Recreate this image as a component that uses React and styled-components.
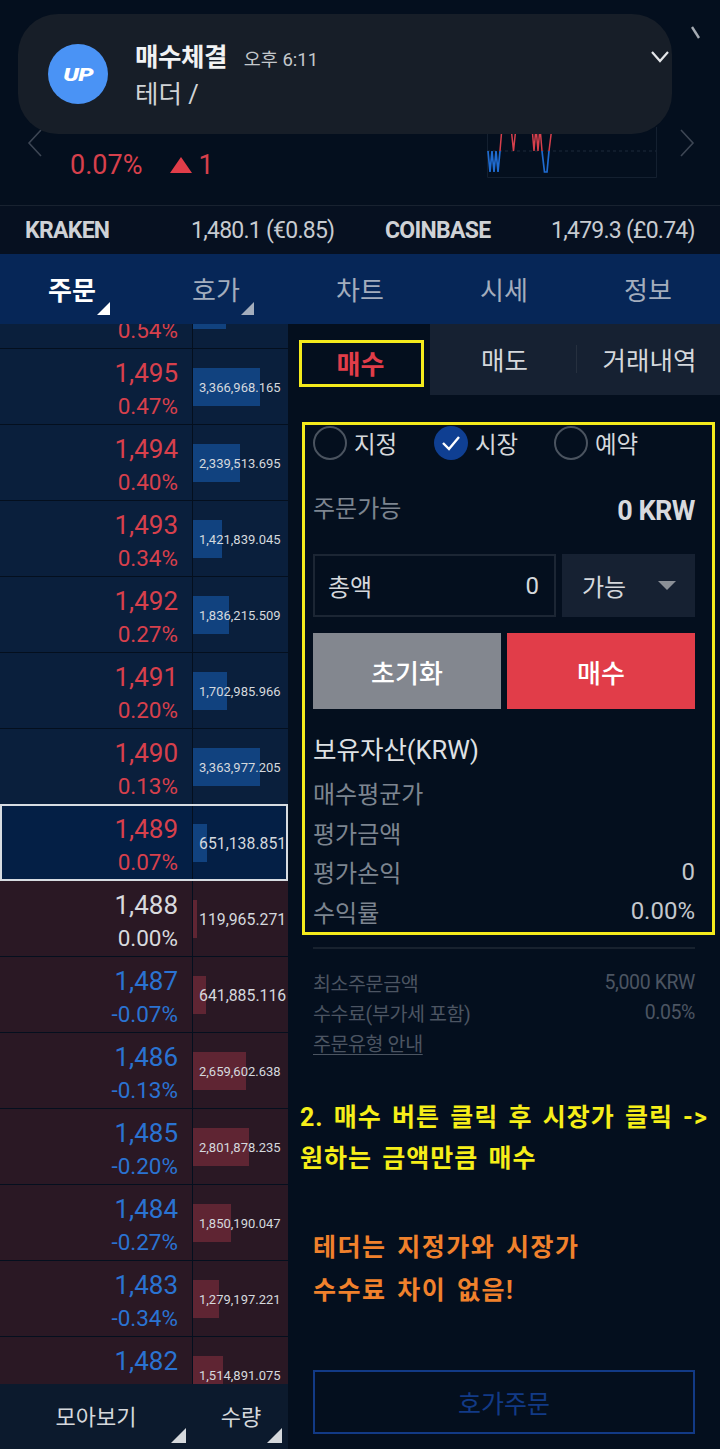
import { createGlobalStyle } from "styled-components";
import styled from "styled-components";

const GlobalStyle = createGlobalStyle`
    html, body {
        margin: 0;
        padding: 0;
        background: #040f1e;
    }
    * {
        box-sizing: border-box;
    }
`

const KR = `Roboto, "Noto Sans CJK KR", sans-serif`

const asks = [
    { price: '1,495', rate: '0.47%', qty: '3,366,968.165', bar: 67 },
    { price: '1,494', rate: '0.40%', qty: '2,339,513.695', bar: 47 },
    { price: '1,493', rate: '0.34%', qty: '1,421,839.045', bar: 29 },
    { price: '1,492', rate: '0.27%', qty: '1,836,215.509', bar: 36 },
    { price: '1,491', rate: '0.20%', qty: '1,702,985.966', bar: 34 },
    { price: '1,490', rate: '0.13%', qty: '3,363,977.205', bar: 67 },
    { price: '1,489', rate: '0.07%', qty: '651,138.851', bar: 14, current: true },
]

const bids = [
    { price: '1,488', rate: '0.00%', qty: '119,965.271', bar: 4, tone: 'flat' },
    { price: '1,487', rate: '-0.07%', qty: '641,885.116', bar: 13 },
    { price: '1,486', rate: '-0.13%', qty: '2,659,602.638', bar: 53 },
    { price: '1,485', rate: '-0.20%', qty: '2,801,878.235', bar: 56 },
    { price: '1,484', rate: '-0.27%', qty: '1,850,190.047', bar: 38 },
    { price: '1,483', rate: '-0.34%', qty: '1,279,197.221', bar: 26 },
]

const Chevron = ({ left }) => (
    <svg width="16" height="28" viewBox="0 0 16 28" fill="none" stroke="#3d4654" strokeWidth="1.6">
        <path d={left ? "M14 1 L2 14 L14 27" : "M2 1 L14 14 L2 27"} />
    </svg>
)

const App = () => {
    const renderRow = (row, side) => (
        <Row key={row.price} side={side} current={row.current}>
            <PriceCell>
                <Price tone={row.tone || (side === 'ask' ? 'up' : 'down')}>{row.price}</Price>
                <Rate tone={row.tone || (side === 'ask' ? 'up' : 'down')}>{row.rate}</Rate>
            </PriceCell>
            <QtyCell>
                <QtyBar side={side} style={{ width: row.bar }} />
                <Qty long={row.qty.length > 11}>{row.qty}</Qty>
            </QtyCell>
        </Row>
    )

    return (
        <Page>
            <GlobalStyle />
            <Notification>
                <AppLogo><LogoText>UP</LogoText></AppLogo>
                <NotificationBody>
                    <NotificationHead>
                        <NotificationTitle>매수체결</NotificationTitle>
                        <NotificationTime>오후 6:11</NotificationTime>
                    </NotificationHead>
                    <NotificationText>테더 /</NotificationText>
                </NotificationBody>
                <Expand>
                    <svg width="20" height="14" viewBox="0 0 20 14" fill="none" stroke="#e4e6e9" strokeWidth="2.2">
                        <path d="M2 2 L10 11 L18 2" />
                    </svg>
                </Expand>
            </Notification>
            <CornerMark>
                <svg width="10" height="14" viewBox="0 0 10 14" fill="none" stroke="#a5abb3" strokeWidth="2.4">
                    <path d="M1 1 L8 12" />
                </svg>
            </CornerMark>

            <Summary>
                <Chevron left />
                <SummaryMain>
                    <SummaryRate>0.07%</SummaryRate>
                    <SummaryDiff><Triangle />1</SummaryDiff>
                </SummaryMain>
                <Spark width="171" height="51" viewBox="0 0 171 51" fill="none">
                    <path d="M0.5 0 V50.5 H169.5 V0" stroke="#142030" />
                    <path d="M0 24 H169" stroke="#1d2a3a" strokeDasharray="3 3" />
                    <path d="M13 24 L15 0 M24 0 L26.5 24 L29 0 M45 0 L47 24 L49 0 L51 24 L53 0 L55 24 M62 24 L65 0" stroke="#d7404c" strokeWidth="1.5" />
                    <path d="M1 24 L3 45 L5 24 L7 45 L9 24 L11 45 L13 24 M55 24 L57.5 45 L60 45 L62 24" stroke="#1f6bd0" strokeWidth="1.7" />
                </Spark>
                <Chevron />
            </Summary>

            <Exchanges>
                <ExchangeName>KRAKEN</ExchangeName>
                <ExchangeValue>1,480.1 (€0.85)</ExchangeValue>
                <ExchangeName>COINBASE</ExchangeName>
                <ExchangeValue>1,479.3 (£0.74)</ExchangeValue>
            </Exchanges>

            <Tabs>
                <Tab active marked>주문</Tab>
                <Tab marked>호가</Tab>
                <Tab>차트</Tab>
                <Tab>시세</Tab>
                <Tab>정보</Tab>
            </Tabs>

            <Content>
                <OrderBook>
                    <BookList>
                        <PartialRow>
                            <PartialPrice><Rate tone="up">0.54%</Rate></PartialPrice>
                            <PartialQty><QtyBar side="ask" style={{ width: 33, height: 5 }} /></PartialQty>
                        </PartialRow>
                        {asks.map(row => renderRow(row, 'ask'))}
                        {bids.map(row => renderRow(row, 'bid'))}
                        <Row side="bid">
                            <PriceCell>
                                <Price tone="down">1,482</Price>
                            </PriceCell>
                            <QtyCell>
                                <QtyBar side="bid" style={{ width: 30 }} />
                                <Qty long>1,514,891.075</Qty>
                            </QtyCell>
                        </Row>
                    </BookList>
                    <BookFooter>
                        <FooterItem>모아보기</FooterItem>
                        <FooterItem narrow>수량</FooterItem>
                    </BookFooter>
                </OrderBook>

                <OrderPanel>
                    <SideTabs>
                        <BuyTab><BuyTabMark>매수</BuyTabMark></BuyTab>
                        <SideTab>매도</SideTab>
                        <SideTab divided>거래내역</SideTab>
                    </SideTabs>

                    <FormBox>
                        <RadioRow>
                            <RadioOption><Radio /><RadioLabel>지정</RadioLabel></RadioOption>
                            <RadioOption>
                                <Radio checked>
                                    <svg width="22" height="18" viewBox="0 0 22 18" fill="none" stroke="#fff" strokeWidth="2.4">
                                        <path d="M3 9 L9 15 L19 3" />
                                    </svg>
                                </Radio>
                                <RadioLabel>시장</RadioLabel>
                            </RadioOption>
                            <RadioOption><Radio /><RadioLabel>예약</RadioLabel></RadioOption>
                        </RadioRow>

                        <AvailableRow>
                            <MutedLabel>주문가능</MutedLabel>
                            <AvailableValue>0 KRW</AvailableValue>
                        </AvailableRow>

                        <InputRow>
                            <AmountInput>
                                <span>총액</span>
                                <span>0</span>
                            </AmountInput>
                            <SelectBox>
                                <span>가능</span>
                                <Caret />
                            </SelectBox>
                        </InputRow>

                        <ButtonRow>
                            <ActionButton>초기화</ActionButton>
                            <ActionButton primary>매수</ActionButton>
                        </ButtonRow>

                        <HoldingTitle>보유자산(KRW)</HoldingTitle>
                        <HoldingRow><MutedLabel>매수평균가</MutedLabel></HoldingRow>
                        <HoldingRow><MutedLabel>평가금액</MutedLabel></HoldingRow>
                        <HoldingRow><MutedLabel>평가손익</MutedLabel><HoldingValue>0</HoldingValue></HoldingRow>
                        <HoldingRow><MutedLabel>수익률</MutedLabel><HoldingValue>0.00%</HoldingValue></HoldingRow>
                    </FormBox>

                    <InfoBlock>
                        <InfoRow><span>최소주문금액</span><span>5,000 KRW</span></InfoRow>
                        <InfoRow><span>수수료(부가세 포함)</span><span>0.05%</span></InfoRow>
                        <InfoRow><InfoLink>주문유형 안내</InfoLink></InfoRow>
                    </InfoBlock>

                    <YellowNote>
                        2. 매수 버튼 클릭 후 시장가 클릭 -&gt;<br />
                        원하는 금액만큼 매수
                    </YellowNote>
                    <OrangeNote>
                        테더는 지정가와 시장가<br />
                        수수료 차이 없음!
                    </OrangeNote>

                    <QuoteButton>호가주문</QuoteButton>
                </OrderPanel>
            </Content>
        </Page>
    )
}

export default App;

const Page = styled.div`
    position: relative;
    width: 720px;
    height: 1449px;
    overflow: hidden;
    display: flex;
    flex-direction: column;
    background: #040f1e;
    font-family: ${KR};
`

const Notification = styled.div`
    position: absolute;
    top: 14px;
    left: 18px;
    width: 654px;
    height: 120px;
    border-radius: 40px;
    background: #171e28;
    display: flex;
    align-items: center;
    padding: 0 0 0 30px;
    z-index: 2;
`

const AppLogo = styled.div`
    width: 60px;
    height: 60px;
    border-radius: 50%;
    background: #4a93f5;
    display: flex;
    align-items: center;
    justify-content: center;
`

const LogoText = styled.span`
    display: inline-block;
    color: #fff;
    font: italic 900 18px Roboto, sans-serif;
    letter-spacing: -0.5px;
    transform: scaleX(1.35);
`

const NotificationBody = styled.div`
    margin-left: 27px;
    padding-top: 3px;
    display: flex;
    flex-direction: column;
    gap: 3px;
`

const NotificationHead = styled.div`
    display: flex;
    align-items: baseline;
    gap: 17px;
`

const NotificationTitle = styled.div`
    color: #f1f2f3;
    font-size: 25.5px;
    font-weight: 700;
    letter-spacing: -0.5px;
    line-height: 34px;
`

const NotificationTime = styled.div`
    color: #c4c8cc;
    font-size: 18.5px;
    font-weight: 400;
`

const NotificationText = styled.div`
    color: #d0d3d6;
    font-size: 25.5px;
    line-height: 34px;
`

const Expand = styled.div`
    position: absolute;
    top: 35px;
    right: -4px;
    width: 26px;
`

const CornerMark = styled.div`
    position: absolute;
    top: 25px;
    left: 691px;
`

const Summary = styled.div`
    height: 205px;
    display: flex;
    align-items: flex-start;
    padding: 129px 0 0 27px;
`

const SummaryMain = styled.div`
    display: flex;
    align-items: center;
    gap: 28px;
    margin: 12px 0 0 27px;
    width: 417px;
    height: 48px;
`

const SummaryRate = styled.div`
    color: #d7404c;
    font-size: 27px;
`

const SummaryDiff = styled.div`
    display: flex;
    align-items: center;
    gap: 6px;
    color: #d7404c;
    font-size: 27px;
`

const Triangle = styled.span`
    width: 0;
    height: 0;
    border-left: 11px solid transparent;
    border-right: 11px solid transparent;
    border-bottom: 16px solid #e13d49;
`

const Spark = styled.svg`
    margin: -2px 21px 0 0;
    flex: none;
    display: block;
`

const Exchanges = styled.div`
    height: 49px;
    border-top: 1px solid #182230;
    display: grid;
    grid-template-columns: 166px 194px 166px 1fr;
    align-items: center;
    padding: 0 0 0 25px;
    background: #061020;
    white-space: nowrap;
`

const ExchangeName = styled.div`
    color: #cfd2d6;
    font-size: 23px;
    font-weight: 700;
    letter-spacing: -0.7px;
`

const ExchangeValue = styled.div`
    color: #c7cbd0;
    font-size: 23px;
    letter-spacing: -0.75px;
`

const Tabs = styled.div`
    height: 70px;
    flex: none;
    background: #062657;
    display: grid;
    grid-template-columns: repeat(5, 144px);
`

const Tab = styled.div`
    position: relative;
    display: flex;
    align-items: center;
    justify-content: center;
    padding-bottom: 2px;
    color: ${props => props.active ? '#fff' : '#a3adbd'};
    font-size: 26px;
    font-weight: ${props => props.active ? 700 : 400};

    &::after {
        content: '';
        display: ${props => props.marked ? 'block' : 'none'};
        position: absolute;
        right: 34px;
        bottom: 9px;
        border-left: 13px solid transparent;
        border-bottom: 13px solid ${props => props.active ? '#fff' : '#a3adbd'};
    }
`

const Content = styled.div`
    flex: 1;
    min-height: 0;
    display: flex;
`

const OrderBook = styled.div`
    width: 288px;
    flex: none;
    display: flex;
    flex-direction: column;
`

const BookList = styled.div`
    flex: 1;
    min-height: 0;
    overflow: hidden;
`

const BookFooter = styled.div`
    height: 65px;
    flex: none;
    background: #0c1a2d;
    display: flex;
`

const FooterItem = styled.div`
    position: relative;
    width: ${props => props.narrow ? '96px' : '192px'};
    display: flex;
    justify-content: center;
    padding: 15px 0 0 ${props => props.narrow ? '2px' : '0'};
    color: #d5d8dc;
    font-size: 22px;

    &::after {
        content: '';
        position: absolute;
        right: 6px;
        bottom: 6px;
        border-left: 15px solid transparent;
        border-bottom: 15px solid #d5d8dc;
    }
`

const PartialRow = styled.div`
    height: 25px;
    display: flex;
    background: #0a1f3c;
    border-bottom: 1px solid #040f1e;
    overflow: hidden;
`

const PartialPrice = styled.div`
    width: 192px;
    flex: none;
    display: flex;
    justify-content: flex-end;
    align-items: flex-end;
    padding-right: 14px;
    margin-bottom: 2px;
`

const PartialQty = styled.div`
    flex: 1;
    border-left: 1px solid #040f1e;
`

const Row = styled.div`
    position: relative;
    height: 76px;
    display: flex;
    background: ${props => props.side === 'ask' ? '#0a1f3c' : '#2a1824'};
    border-bottom: 1px solid #040f1e;
    ${props => props.current ? 'background: #041f45;' : ''}

    &::after {
        content: '';
        display: ${props => props.current ? 'block' : 'none'};
        position: absolute;
        inset: -1px 0 -1px 0;
        border: 2px solid #d7dce2;
    }
`

const PriceCell = styled.div`
    width: 192px;
    flex: none;
    display: flex;
    flex-direction: column;
    align-items: flex-end;
    padding: 7px 14px 0 0;
`

const toneColor = { up: '#d7404c', down: '#2a73d2', flat: '#d8dade' }

const Price = styled.div`
    color: ${props => toneColor[props.tone]};
    font-size: 26px;
    line-height: 34px;
`

const Rate = styled.div`
    color: ${props => toneColor[props.tone]};
    font-size: 22.5px;
    line-height: 32px;
`

const QtyCell = styled.div`
    position: relative;
    flex: 1;
    display: flex;
    align-items: center;
    border-left: 1px solid #040f1e;
`

const QtyBar = styled.div`
    height: 38px;
    background: ${props => props.side === 'ask' ? '#11427f' : '#5f2533'};
`

const Qty = styled.div`
    position: absolute;
    left: 6px;
    top: 50%;
    transform: translateY(-49%);
    color: #d5d9de;
    font-size: ${props => props.long ? '13px' : '15.8px'};
    white-space: nowrap;
`

const OrderPanel = styled.div`
    flex: 1;
    display: flex;
    flex-direction: column;
    min-width: 0;
`

const SideTabs = styled.div`
    height: 71px;
    flex: none;
    display: flex;
`

const BuyTab = styled.div`
    width: 142px;
    padding: 16px 6px 8px 11px;
`

const BuyTabMark = styled.div`
    height: 47px;
    border: 3px solid #f4ea1c;
    display: flex;
    align-items: center;
    justify-content: center;
    padding: 0 2px 2px 0;
    color: #e13d49;
    font-size: 26px;
    font-weight: 700;
`

const SideTab = styled.div`
    position: relative;
    flex: 1;
    background: #162132;
    display: flex;
    align-items: center;
    justify-content: center;
    padding: 0 0 2px 3px;
    color: #d5d8dc;
    font-size: 25.5px;
    ${props => props.divided ? 'flex: none; width: 144px;' : ''}

    &::before {
        content: '';
        display: ${props => props.divided ? 'block' : 'none'};
        position: absolute;
        left: 0;
        top: 21px;
        height: 28px;
        width: 1px;
        background: #26303f;
    }
`

const FormBox = styled.div`
    margin: 27px 5px 0 14px;
    height: 513px;
    border: 3px solid #f4ea1c;
    padding: 0 17px 0 8px;
    flex: none;
`

const RadioRow = styled.div`
    display: grid;
    grid-template-columns: 121px 120px 1fr;
    height: 35px;
    align-items: center;
`

const RadioOption = styled.div`
    display: flex;
    align-items: center;
    gap: 7px;
`

const Radio = styled.div`
    width: 34px;
    height: 34px;
    border-radius: 50%;
    border: ${props => props.checked ? 'none' : '2px solid #4a535f'};
    background: ${props => props.checked ? '#0f3f92' : 'transparent'};
    display: flex;
    align-items: center;
    justify-content: center;
`

const RadioLabel = styled.div`
    color: #d5d8dc;
    font-size: 23.5px;
`

const AvailableRow = styled.div`
    display: flex;
    justify-content: space-between;
    align-items: center;
    height: 40px;
    margin-top: 26px;
`

const MutedLabel = styled.div`
    color: #7d8590;
    font-size: 24px;
`

const AvailableValue = styled.div`
    color: #d8dade;
    font-size: 27px;
    font-weight: 700;
    letter-spacing: -0.5px;
    padding-top: 10px;
`

const InputRow = styled.div`
    display: flex;
    gap: 6px;
    margin-top: 28px;
    height: 63px;
`

const AmountInput = styled.div`
    width: 243px;
    border: 2px solid #1c2634;
    display: flex;
    align-items: center;
    justify-content: space-between;
    padding: 0 15px 0 13px;
    color: #d5d8dc;
    font-size: 24px;
`

const SelectBox = styled.div`
    flex: 1;
    background: #162132;
    display: flex;
    align-items: center;
    justify-content: space-between;
    padding: 0 19px 0 20px;
    color: #d5d8dc;
    font-size: 24px;
`

const Caret = styled.span`
    border-left: 9px solid transparent;
    border-right: 9px solid transparent;
    border-top: 9px solid #8b9097;
`

const ButtonRow = styled.div`
    display: flex;
    gap: 6px;
    margin-top: 16px;
    height: 76px;
`

const ActionButton = styled.div`
    flex: 1;
    background: ${props => props.primary ? '#e13d49' : '#83878f'};
    display: flex;
    align-items: center;
    justify-content: center;
    color: #fff;
    font-size: 26px;
    font-weight: 500;
`

const HoldingTitle = styled.div`
    margin-top: 13px;
    height: 51px;
    display: flex;
    align-items: center;
    color: #dfe1e4;
    font-size: 25.5px;
`

const HoldingRow = styled.div`
    height: 39.5px;
    display: flex;
    align-items: center;
    justify-content: space-between;
`

const HoldingValue = styled.div`
    color: #c4c8cd;
    font-size: 24px;
`

const InfoBlock = styled.div`
    margin: 12px 25px 0;
    border-top: 2px solid #18222f;
    padding-top: 18px;
    flex: none;
`

const InfoRow = styled.div`
    height: 30px;
    display: flex;
    align-items: center;
    justify-content: space-between;
    color: #4c5562;
    font-size: 19.5px;
    letter-spacing: -0.4px;
`

const InfoLink = styled.span`
    text-decoration: underline;
    text-underline-offset: 3px;
`

const YellowNote = styled.div`
    margin: 40px 0 0 12px;
    color: #f6ee19;
    font-size: 25px;
    font-weight: 700;
    letter-spacing: 1px;
    word-spacing: 3px;
    line-height: 41px;
    white-space: nowrap;
`

const OrangeNote = styled.div`
    margin: 47px 0 0 25px;
    color: #f0812c;
    font-size: 25px;
    font-weight: 700;
    letter-spacing: 1.5px;
    word-spacing: 3px;
    line-height: 43px;
`

const QuoteButton = styled.div`
    margin: 58px 25px 0;
    height: 64px;
    flex: none;
    border: 2px solid #123a86;
    display: flex;
    align-items: center;
    justify-content: center;
    color: #123a86;
    font-size: 25px;
`
